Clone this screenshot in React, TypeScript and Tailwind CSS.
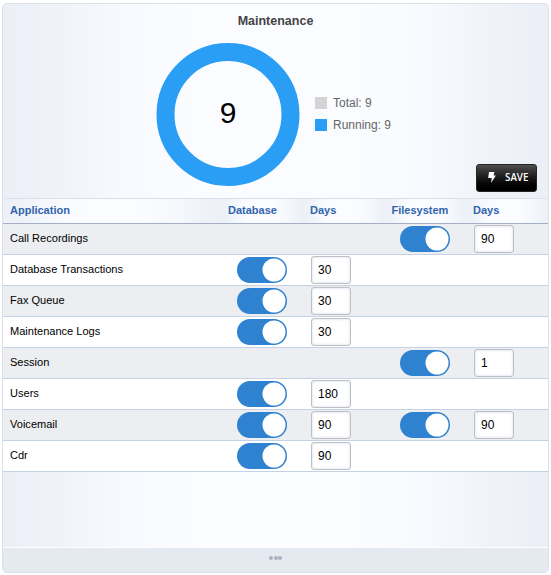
type Setting = number | null;

const rows: { name: string; database: Setting; filesystem: Setting }[] = [
  { name: "Call Recordings", database: null, filesystem: 90 },
  { name: "Database Transactions", database: 30, filesystem: null },
  { name: "Fax Queue", database: 30, filesystem: null },
  { name: "Maintenance Logs", database: 30, filesystem: null },
  { name: "Session", database: null, filesystem: 1 },
  { name: "Users", database: 180, filesystem: null },
  { name: "Voicemail", database: 90, filesystem: 90 },
  { name: "Cdr", database: 90, filesystem: null },
];

const columns = ["Application", "Database", "Days", "Filesystem", "Days"];

function Toggle() {
  return (
    <button
      role="switch"
      aria-checked="true"
      className="flex h-[26px] w-[50px] items-center justify-end rounded-full bg-[#2e82d0] pr-[1.5px]"
    >
      <span className="size-[23px] -translate-x-[0.5px] -translate-y-[0.5px] rounded-full bg-white" />
    </button>
  );
}

function Days({ value }: { value: number }) {
  return (
    <input
      defaultValue={value}
      className="block h-7 w-10 rounded-[3px] border border-[#c0c0c0] bg-white px-1.5 text-xs text-black shadow-[inset_0_0_3px_#cddaf0] outline-none"
    />
  );
}

function Cells({ value }: { value: Setting }) {
  return (
    <>
      <div className="pl-[15px]">{value !== null && <Toggle />}</div>
      <div className="pl-[7px]">{value !== null && <Days value={value} />}</div>
    </>
  );
}

export default function App() {
  return (
    <main className="h-[575px] w-[551px] overflow-hidden bg-white pt-[3px] pl-[2px] font-['Liberation_Sans',Arial,sans-serif]">
      <section className="flex h-[570px] w-[547px] flex-col overflow-hidden rounded-[5px] border border-[#dbe0ea] bg-[linear-gradient(90deg,#edeff7_0px,#edf0f8_14px,#ecf0f9_22px,#eef2f6_27px,#eff3f7_50px,#f5f8fc_105px,#f9fbff_155px,#fbfcff_200px,#fbfcff_350px,#f9fbff_395px,#f5f8fc_440px,#eff3f7_490px,#eef1f6_518px,#ecf0f9_525px,#edeff7_545px)]">
        <header className="flex h-[194px] flex-col">
          <h1 className="pt-[7px] text-center text-[12.5px] leading-5 font-bold text-[#444]">
            Maintenance
          </h1>
          <div className="flex h-[144px] items-center pt-[21px] pl-[153px]">
            <div className="mt-px mr-px flex size-[143px] shrink-0 translate-x-[0.5px] items-center justify-center rounded-full border-[18px] border-[#2a9df4] pb-0.5 text-[30px] leading-none text-black">
              9
            </div>
            <ul className="ml-[15px] space-y-2 text-xs leading-[14px] text-[#666]">
              <li className="flex items-center gap-1.5">
                <span className="size-3 bg-[#d4d4d4]" />
                Total: 9
              </li>
              <li className="flex items-center gap-1.5">
                <span className="size-3 bg-[#2a9df4]" />
                Running: 9
              </li>
            </ul>
          </div>
          <button className="-mt-[11px] mr-[11px] flex h-7 w-[61px] shrink-0 items-center self-end rounded-[3px] border border-[#242424] bg-linear-to-b from-[#4f4f4f] to-black pb-0.5 pl-[11px] font-['Open_Sans',sans-serif] text-[11px] font-semibold text-white">
            <svg viewBox="0 0 8 11" className="mr-[9px] h-[11px] w-2 fill-white">
              <path d="M1 0h5.4L5.6 3.4h2.3L3 11l.8-5H.2z" />
            </svg>
            <span className="origin-left scale-x-[0.89]">SAVE</span>
          </button>
        </header>

        <div className="grid h-[26px] shrink-0 grid-cols-[219px_82px_81px_82px_81px] overflow-hidden rounded-t-[4px] border-t border-b border-t-[#dbe0ea] border-b-[#a4aec5] text-[11px] leading-[23px] font-bold text-[#3164ad]">
          {columns.map((column, index) => (
            <div
              key={index}
              className="bg-[linear-gradient(90deg,#edf0f8_0%,#eff3f7_8%,#f9fbff_28%,#fbfcff_40%,#fbfcff_62%,#f5f8fc_80%,#eef2f6_94%,#edf0f8_100%)] pl-[7px] nth-2:pl-[6px] nth-3:pl-[6px] nth-4:pl-[6.5px] nth-5:pl-[6px]"
            >
              {column}
            </div>
          ))}
        </div>

        {rows.map((row) => (
          <div
            key={row.name}
            className="grid h-[31px] shrink-0 grid-cols-[219px_82px_81px_82px_81px] items-center border-b border-[#c5d1e5] bg-white odd:bg-[#eceef1] text-[11px]"
          >
            <div className="pb-0.5 pl-[7px] text-[11.05px] text-black">{row.name}</div>
            <Cells value={row.database} />
            <Cells value={row.filesystem} />
          </div>
        ))}

        <footer className="mt-auto flex h-[25px] shrink-0 items-center justify-center gap-[0.5px] border-t border-white bg-[#e5e9f0] pb-1">
          <span className="size-1 rounded-full bg-[#a9b0c2]" />
          <span className="size-1 rounded-full bg-[#a9b0c2]" />
          <span className="size-1 rounded-full bg-[#a9b0c2]" />
        </footer>
      </section>
    </main>
  );
}
